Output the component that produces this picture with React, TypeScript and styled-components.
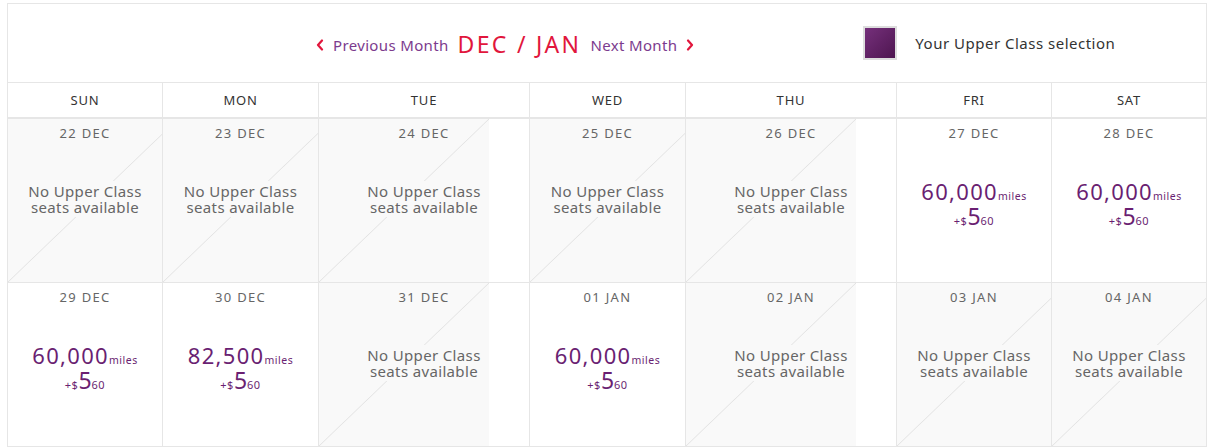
import styled, { createGlobalStyle } from 'styled-components';

const GlobalStyle = createGlobalStyle`
  body {
    margin: 0;
    background: #ffffff;
    font-family: "Noto Sans", "Open Sans", sans-serif;
  }
`;

type Price = { miles: string; dollars: string; cents: string };
type Day = { date: string; price?: Price };

// widths include each column's right border; the last one has none
const COLUMNS = [
  { name: 'SUN', width: 155 },
  { name: 'MON', width: 156 },
  { name: 'TUE', width: 211 },
  { name: 'WED', width: 156 },
  { name: 'THU', width: 211 },
  { name: 'FRI', width: 155 },
  { name: 'SAT', width: 154 },
];

const sixty: Price = { miles: '60,000', dollars: '5', cents: '60' };

const WEEKS: Day[][] = [
  [
    { date: '22 DEC' },
    { date: '23 DEC' },
    { date: '24 DEC' },
    { date: '25 DEC' },
    { date: '26 DEC' },
    { date: '27 DEC', price: sixty },
    { date: '28 DEC', price: sixty },
  ],
  [
    { date: '29 DEC', price: sixty },
    { date: '30 DEC', price: { miles: '82,500', dollars: '5', cents: '60' } },
    { date: '31 DEC' },
    { date: '01 JAN', price: sixty },
    { date: '02 JAN' },
    { date: '03 JAN' },
    { date: '04 JAN' },
  ],
];

function Chevron({ dir }: { dir: 'left' | 'right' }) {
  return (
    <ChevronSvg viewBox="0 0 8 12" aria-hidden="true">
      <path d={dir === 'left' ? 'M6 1.5L2 6l4 4.5' : 'M2 1.5L6 6l-4 4.5'} />
    </ChevronSvg>
  );
}

export default function App() {
  return (
    <>
      <GlobalStyle />
      <Calendar>
        <Header>
          <Nav>
            <NavLink>
              <Chevron dir="left" />
              Previous Month
            </NavLink>
            <MonthTitle>DEC / JAN</MonthTitle>
            <NavLink>
              Next Month
              <Chevron dir="right" />
            </NavLink>
          </Nav>
          <Legend>
            <Swatch />
            Your Upper Class selection
          </Legend>
        </Header>
        <Grid>
          {COLUMNS.map((c, i) => (
            <DayName key={c.name} $last={i === COLUMNS.length - 1}>
              {c.name}
            </DayName>
          ))}
          {WEEKS.map((week, w) =>
            week.map((day, i) => (
              <Cell
                key={day.date}
                $empty={!day.price}
                $last={i === week.length - 1}
                $bottom={w === WEEKS.length - 1}
              >
                <DateLabel>{day.date}</DateLabel>
                <CellBody>
                  {day.price ? (
                    <PriceBlock>
                      <Miles>
                        {day.price.miles}
                        <small>miles</small>
                      </Miles>
                      <Tax>
                        <small>+$</small>
                        <big>{day.price.dollars}</big>
                        <small>{day.price.cents}</small>
                      </Tax>
                    </PriceBlock>
                  ) : (
                    <NoSeats>
                      No Upper Class
                      <br />
                      seats available
                    </NoSeats>
                  )}
                </CellBody>
              </Cell>
            )),
          )}
        </Grid>
      </Calendar>
    </>
  );
}

const Calendar = styled.div`
  width: 1200px;
  margin: 3px 0 0 7px;
  border: 1px solid #e6e6e6;
  box-sizing: border-box;
`;

const Header = styled.div`
  display: flex;
  align-items: center;
  height: 79px;
  padding-left: 308px;
  border-bottom: 1px solid #e6e6e6;
  box-sizing: border-box;
`;

const Nav = styled.div`
  display: flex;
  align-items: center;
  gap: 9px;
  padding-top: 3px;
`;

const NavLink = styled.a`
  display: flex;
  align-items: center;
  gap: 9px;
  color: #7c3b8e;
  font-size: 15px;
  letter-spacing: 0.35px;
  cursor: pointer;
`;

const ChevronSvg = styled.svg`
  width: 8px;
  height: 12px;
  fill: none;
  stroke: #e1163c;
  stroke-width: 2.2;
  stroke-linecap: round;
  stroke-linejoin: round;
`;

const MonthTitle = styled.span`
  color: #e1163c;
  font-size: 23px;
  letter-spacing: 2.3px;
  margin-top: -2px;
`;

const Legend = styled.div`
  display: flex;
  align-items: center;
  gap: 18px;
  margin-left: 169px;
  color: #333333;
  font-size: 15px;
  letter-spacing: 0.5px;
`;

const Swatch = styled.span`
  width: 30px;
  height: 30px;
  border: 2px solid #dddddd;
  background: linear-gradient(135deg, #75307b 0%, #4e1550 100%);
`;

const Grid = styled.div`
  display: grid;
  grid-template-columns: ${COLUMNS.map((c) => `${c.width}px`).join(' ')};
  grid-template-rows: 36px 164px 163px;
`;

const DayName = styled.div<{ $last: boolean }>`
  display: flex;
  align-items: center;
  justify-content: center;
  padding-bottom: 1px;
  border-right: ${({ $last }) => ($last ? 'none' : '1px solid #e6e6e6')};
  border-bottom: 2px solid #e6e6e6;
  color: #333333;
  font-size: 13px;
  letter-spacing: 0.8px;
`;

const Cell = styled.div<{ $empty: boolean; $last: boolean; $bottom: boolean }>`
  display: flex;
  flex-direction: column;
  overflow: hidden;
  border-right: ${({ $last }) => ($last ? 'none' : '1px solid #e6e6e6')};
  border-bottom: ${({ $bottom }) => ($bottom ? 'none' : '1px solid #e6e6e6')};
  background: ${({ $empty }) =>
    $empty
      ? `linear-gradient(to bottom right, transparent calc(50% - 0.8px), #e4e4e4 50%, transparent calc(50% + 0.8px)) 0 0 / 170px 100% no-repeat,
         linear-gradient(#f9f9f9, #f9f9f9) 0 0 / 170px 100% no-repeat, #ffffff`
      : '#ffffff'};
`;

const DateLabel = styled.div`
  padding-top: 5px;
  height: 26px;
  box-sizing: border-box;
  text-align: center;
  color: #666666;
  font-size: 13px;
  letter-spacing: 1.3px;
`;

const CellBody = styled.div`
  flex: 1;
  display: flex;
  align-items: center;
  justify-content: center;
  padding-bottom: 30px;
`;

const NoSeats = styled.div`
  padding: 2px 0;
  background: #f9f9f9;
  color: #666666;
  font-size: 15px;
  letter-spacing: 0.35px;
  line-height: 16px;
  text-align: center;
`;

const PriceBlock = styled.div`
  display: flex;
  flex-direction: column;
  align-items: center;
  color: #6a1f72;
  margin-top: 15px;
`;

const Miles = styled.div`
  font-size: 22px;
  letter-spacing: 1.3px;
  line-height: 20px;

  small {
    font-size: 10.5px;
    letter-spacing: 0.5px;
  }
`;

const Tax = styled.div`
  display: flex;
  align-items: baseline;
  line-height: 20px;

  small {
    font-size: 11px;
    letter-spacing: 0.5px;
  }

  big {
    font-size: 23px;
  }
`;
